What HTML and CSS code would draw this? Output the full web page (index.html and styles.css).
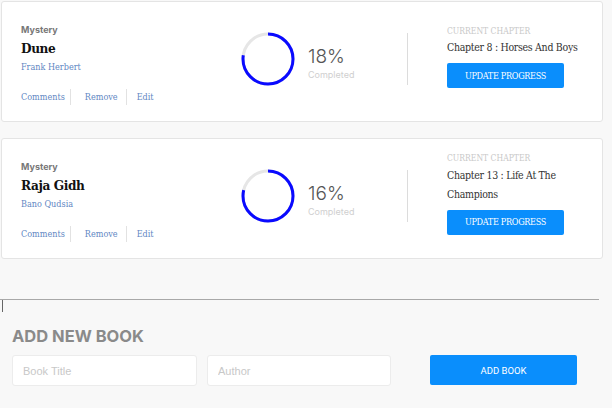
FILE: index.html
```html
<!DOCTYPE html>
<html>
<head>
<meta charset="utf-8">
<link rel="stylesheet" href="styles.css">
</head>
<body>
<div class="books">
  <div class="card">
    <div class="info">
      <div class="genre">Mystery</div>
      <div class="title">Dune</div>
      <div class="author">Frank Herbert</div>
      <div class="links">
        <a class="link link-comments">Comments</a>
        <a class="link link-remove">Remove</a>
        <a class="link link-edit">Edit</a>
      </div>
    </div>
    <div class="progress">
      <svg class="ring" width="54" height="54" viewBox="0 0 54 54">
        <circle cx="27" cy="27" r="25" fill="none" stroke="#e6e6e6" stroke-width="3"/>
        <circle cx="27" cy="27" r="25" fill="none" stroke="#0a0aff" stroke-width="3" stroke-dasharray="121 200" transform="rotate(-90 27 27)"/>
      </svg>
      <div class="pct">
        <div class="pct-num">18%</div>
        <div class="pct-label">Completed</div>
      </div>
    </div>
    <div class="divider"></div>
    <div class="chapter">
      <div class="chapter-label">CURRENT CHAPTER</div>
      <div class="chapter-name">Chapter 8 : Horses And Boys</div>
      <button class="update">UPDATE PROGRESS</button>
    </div>
  </div>

  <div class="card">
    <div class="info">
      <div class="genre">Mystery</div>
      <div class="title">Raja Gidh</div>
      <div class="author">Bano Qudsia</div>
      <div class="links">
        <a class="link link-comments">Comments</a>
        <a class="link link-remove">Remove</a>
        <a class="link link-edit">Edit</a>
      </div>
    </div>
    <div class="progress">
      <svg class="ring" width="54" height="54" viewBox="0 0 54 54">
        <circle cx="27" cy="27" r="25" fill="none" stroke="#e6e6e6" stroke-width="3"/>
        <circle cx="27" cy="27" r="25" fill="none" stroke="#0a0aff" stroke-width="3" stroke-dasharray="123 200" transform="rotate(-90 27 27)"/>
      </svg>
      <div class="pct">
        <div class="pct-num">16%</div>
        <div class="pct-label">Completed</div>
      </div>
    </div>
    <div class="divider"></div>
    <div class="chapter">
      <div class="chapter-label">CURRENT CHAPTER</div>
      <div class="chapter-name">Chapter 13 : Life At The Champions</div>
      <button class="update">UPDATE PROGRESS</button>
    </div>
  </div>
</div>

<div class="rule"><div class="tick"></div></div>

<div class="add">
  <h2 class="add-title">ADD NEW BOOK</h2>
  <div class="add-form">
    <input class="field field-title" type="text" placeholder="Book Title">
    <input class="field field-author" type="text" placeholder="Author">
    <button class="add-btn">ADD BOOK</button>
  </div>
</div>
</body>
</html>
```
FILE: styles.css
```css
html, body {
  margin: 0;
  padding: 0;
  background: #f8f8f8;
}
body {
  width: 612px;
  height: 408px;
  overflow: hidden;
  font-family: "DejaVu Serif", "Liberation Serif", serif;
  font-stretch: condensed;
}
.books {
  padding: 1px 0 0 1px;
  display: flex;
  flex-direction: column;
  gap: 16px;
}
.card {
  width: 576px;
  background: #fff;
  border: 1px solid #e4e4e4;
  border-radius: 3px;
  padding: 9px 5px 15px 19px;
  display: flex;
  align-items: center;
  min-height: 95px;
}
.info {
  width: 220px;
  flex: none;
  padding-top: 12px;
  align-self: flex-start;
}
.genre {
  font-family: "Inter", "Lato", sans-serif;
  font-size: 9px;
  font-weight: 700;
  color: #777;
  line-height: 14px;
}
.title {
  font-size: 13.5px;
  font-weight: 700;
  letter-spacing: -0.4px;
  color: #111;
  line-height: 22px;
}
.author {
  font-size: 9px;
  color: #5f87c3;
  line-height: 17px;
}
.links {
  margin-top: 13px;
  display: flex;
  line-height: 16px;
}
.link {
  font-size: 9px;
  color: #5f87c3;
}
.link-comments {
  padding-right: 5px;
}
.link-remove {
  border-left: 1px solid #e2e2e2;
  padding: 0 8px 0 14px;
}
.link-edit {
  border-left: 1px solid #e2e2e2;
  padding-left: 10px;
}
.progress {
  width: 166px;
  flex: none;
  display: flex;
  align-items: center;
}
.ring {
  display: block;
  flex: none;
}
.pct {
  margin-left: 13px;
  padding-top: 8px;
  font-family: "Inter", "Lato", sans-serif;
}
.pct-num {
  font-size: 19px;
  font-weight: 300;
  color: #555;
  line-height: 24px;
}
.pct-label {
  font-size: 9px;
  color: #cfcfcf;
  line-height: 12px;
}
.divider {
  width: 1px;
  height: 52px;
  flex: none;
  background: #dcdcdc;
}
.chapter {
  margin-left: 39px;
  margin-bottom: 4px;
  width: 150px;
  flex: none;
}
.chapter-label {
  font-size: 8.5px;
  color: #c8c8c8;
  line-height: 12px;
}
.chapter-name {
  margin-top: 1.5px;
  font-size: 10.5px;
  letter-spacing: -0.3px;
  color: #333;
  line-height: 19px;
}
.update {
  display: block;
  margin-top: 6px;
  width: 117px;
  height: 25px;
  border: none;
  border-radius: 2px;
  background: #0a8efc;
  color: #fff;
  font-family: "DejaVu Serif", "Liberation Serif", serif;
  font-stretch: condensed;
  font-size: 9px;
  letter-spacing: -0.3px;
  padding: 0;
}
.rule {
  margin-top: 40px;
  width: 599px;
  border-top: 1px solid #a8a8a8;
}
.tick {
  margin-left: 2px;
  width: 1px;
  height: 12px;
  background: #666;
}
.add {
  padding: 0 12px;
}
.add-title {
  margin: 14px 0 0 0;
  font-family: "Inter", "Lato", sans-serif;
  font-size: 16.5px;
  font-weight: 700;
  line-height: 20px;
  color: #8a8a8a;
}
.add-form {
  margin-top: 9px;
  display: flex;
  align-items: flex-start;
}
.field {
  box-sizing: border-box;
  height: 31px;
  border: 1px solid #ececec;
  border-radius: 3px;
  background: #fff;
  padding: 0 10px;
  font-family: "Liberation Sans", Arial, sans-serif;
  font-size: 11px;
  outline: none;
}
.field::placeholder {
  color: #c8c8c8;
}
.field-title {
  width: 185px;
}
.field-author {
  width: 184px;
  margin-left: 10px;
}
.add-btn {
  margin-left: 39px;
  width: 147px;
  height: 30px;
  border: none;
  border-radius: 2px;
  background: #0a8efc;
  color: #fff;
  font-family: "Roboto", "Liberation Sans", sans-serif;
  font-size: 9.5px;
  padding: 0;
}
```
